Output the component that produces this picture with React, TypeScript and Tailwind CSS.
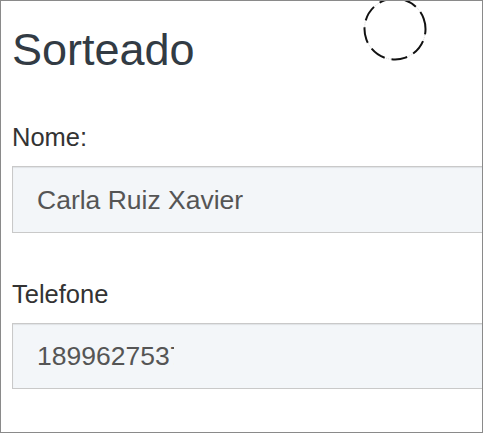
const Spinner = () => (
  <svg
    className="absolute left-[362px] top-[-4px]"
    width="64"
    height="64"
    viewBox="0 0 64 64"
  >
    <circle cx="32" cy="32" r="30.5" fill="none" stroke="#d4d4d4" strokeWidth="1" strokeDasharray="1 1" />
    <circle
      cx="32"
      cy="32"
      r="30.5"
      fill="none"
      stroke="#111"
      strokeWidth="2"
      strokeDasharray="16 7"
      transform="rotate(-20 32 32)"
    />
  </svg>
);

const Field = ({ label, children, h }: { label: string; children: React.ReactNode; h: string }) => (
  <div className="flex flex-col">
    <label className="text-[25.5px] leading-[30px] text-[#333]">{label}</label>
    <div
      className={`mt-[14px] flex w-[600px] items-center border border-[#c9c9c9] bg-[#f3f6f9] pl-[24px] text-[26.5px] leading-[30px] text-[#555] shadow-[inset_0_1px_1px_rgba(0,0,0,0.08)] ${h}`}
    >
      {children}
    </div>
  </div>
);

export default function App() {
  return (
    <div
      className="relative h-[433px] w-[483px] overflow-hidden border border-[#8a8a8a] bg-white"
      style={{ fontFamily: '"Liberation Sans", Arial, sans-serif' }}
    >
      <Spinner />
      <div className="flex flex-col pl-[11px] pt-[26px]">
        {/* TITLE */}
        <h1 className="text-[45px] leading-[45px] text-[#323b44]">Sorteado</h1>

        {/* NOME */}
        <div className="mt-[50px]">
          <Field label="Nome:" h="h-[67px]">
            Carla Ruiz Xavier
          </Field>
        </div>

        {/* TELEFONE */}
        <div className="mt-[46px]">
          <Field label="Telefone" h="h-[66px]">
            <span className="block w-[137px] overflow-hidden whitespace-nowrap">1899627537</span>
          </Field>
        </div>
      </div>
    </div>
  );
}
